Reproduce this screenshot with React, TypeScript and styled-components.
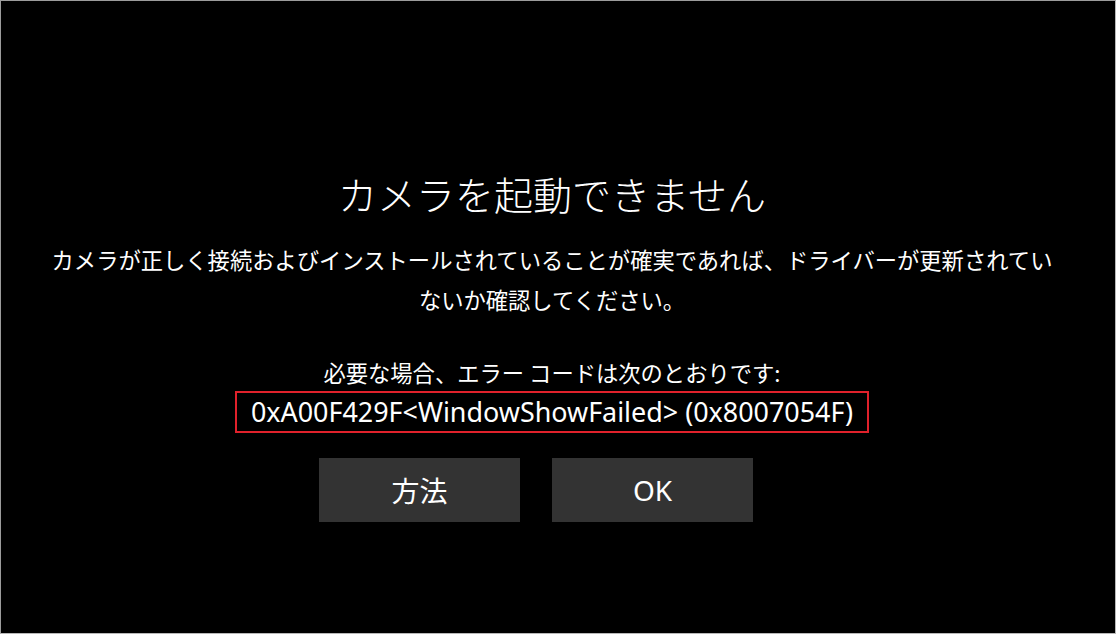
import React from "react";
import styled, { createGlobalStyle } from "styled-components";

const GlobalStyle = createGlobalStyle`
  html, body {
    margin: 0;
    padding: 0;
    background: #000;
  }
  body {
    font-family: "Noto Sans", "Noto Sans CJK JP", sans-serif;
  }
`;

const Frame = styled.div`
  box-sizing: border-box;
  width: 1116px;
  height: 634px;
  background: #000;
  border-top: 1px solid #9c9c9c;
  border-left: 1px solid #9c9c9c;
  border-right: 1px solid #b8b8b8;
  border-bottom: 1px solid #b8b8b8;
  color: #fff;
  display: flex;
  flex-direction: column;
  align-items: center;
  padding: 168px 12px 0 0;
`;

const Title = styled.h1`
  margin: 0;
  font-family: "Noto Sans CJK JP", sans-serif;
  font-weight: 300;
  font-size: 39px;
  line-height: 48px;
  text-align: center;
`;

const Message = styled.p<{ $gap: number }>`
  margin: ${(p) => p.$gap}px 0 0;
  width: 1010px;
  font-family: "Noto Sans CJK JP", sans-serif;
  font-size: 22.3px;
  line-height: 40px;
  text-align: center;
`;

const CodeBox = styled.div<{ $color: string }>`
  margin-top: -1px;
  border: 2px solid ${(p) => p.$color};
  padding: 0 14px;
  font-family: "Noto Sans", "Noto Sans CJK JP", sans-serif;
  font-size: 26.9px;
  line-height: 38px;
  white-space: nowrap;
`;

const ButtonRow = styled.div`
  margin-top: 25px;
  width: 466px;
  display: flex;
  gap: 32px;
`;

const Button = styled.button`
  width: 201px;
  height: 64px;
  border: none;
  background: #333333;
  color: #fff;
  font-family: "Noto Sans", "Noto Sans CJK JP", sans-serif;
  font-size: 28px;
  padding: 0;
  cursor: pointer;
`;

export default function App() {
  return (
    <>
      <GlobalStyle />
      <Frame>
        <Title>カメラを起動できません</Title>
        <Message $gap={22}>
          カメラが正しく接続およびインストールされていることが確実であれば、ドライバーが更新されていないか確認してください。
        </Message>
        <Message $gap={33}>必要な場合、エラー コードは次のとおりです:</Message>
        <CodeBox $color="#e0212b">
          0xA00F429F&lt;WindowShowFailed&gt; (0x8007054F)
        </CodeBox>
        <ButtonRow>
          <Button>方法</Button>
          <Button>OK</Button>
        </ButtonRow>
      </Frame>
    </>
  );
}
